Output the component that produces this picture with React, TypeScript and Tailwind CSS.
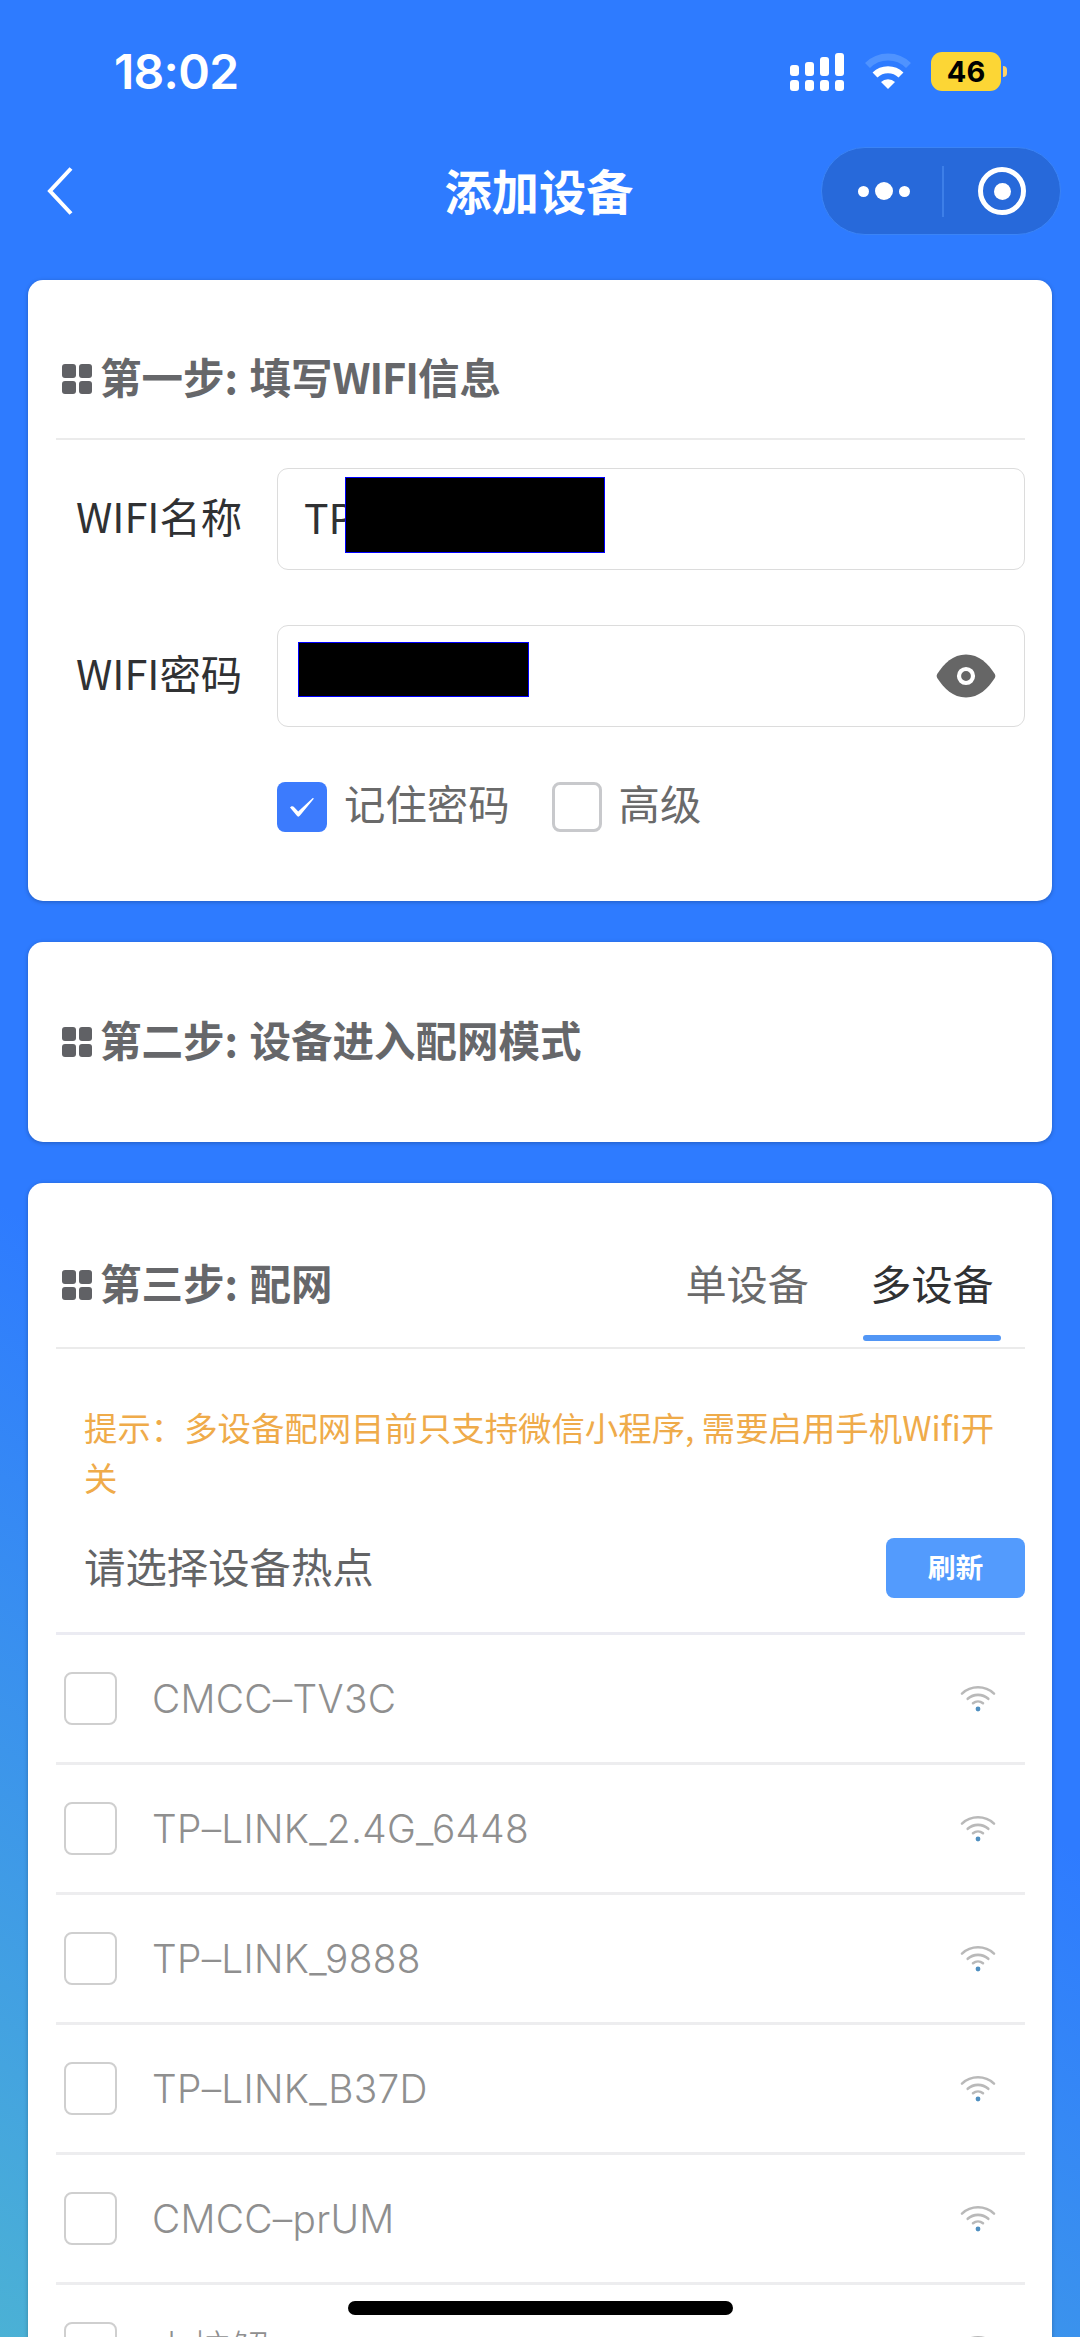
import { useState } from "react";
import type { ReactNode } from "react";

const networks = [
  "CMCC–TV3C",
  "TP–LINK_2.4G_6448",
  "TP–LINK_9888",
  "TP–LINK_B37D",
  "CMCC–prUM",
  "小核解",
];

function StatusBar() {
  return (
    <div className="flex h-[147px] items-start justify-between pr-[73px] pl-[114px]">
      <div className="mt-[43px] font-['Inter'] text-[48px] leading-[58px] font-semibold tracking-[-0.7px] text-white">
        18:02
      </div>
      <div className="mt-[52px] flex items-start">
        <svg width="54" height="39" viewBox="0 0 54 39" fill="#fff">
          <rect x="0" y="13" width="9" height="11" rx="3" />
          <rect x="15" y="10" width="9" height="14" rx="3" />
          <rect x="30" y="5" width="9" height="19" rx="3" />
          <rect x="45" y="1" width="9" height="23" rx="3" />
          <rect x="0" y="28" width="9" height="11" rx="3" />
          <rect x="15" y="28" width="9" height="11" rx="3" />
          <rect x="30" y="28" width="9" height="11" rx="3" />
          <rect x="45" y="28" width="9" height="11" rx="3" />
        </svg>
        <svg className="ml-[21px]" width="46" height="39" viewBox="0 0 46 39" fill="none">
          <path d="M2.5 13.6A29 29 0 0 1 43.5 13.6" stroke="#4f93ff" strokeWidth="7" />
          <path d="M10 23A18.5 18.5 0 0 1 36 23" stroke="#fff" strokeWidth="7" />
          <path d="M23 37L16 30A10 10 0 0 1 30 30Z" fill="#fff" />
        </svg>
        <div className="ml-5 flex items-center gap-[2px]">
          <div className="flex h-[39px] w-[70px] items-center justify-center rounded-[11px] bg-[#fcd635] font-['Inter'] text-[29px] leading-none font-bold text-black">
            46
          </div>
          <div className="h-[11px] w-1 rounded-r-full bg-[#fcd26a]" />
        </div>
      </div>
    </div>
  );
}

function NavBar() {
  return (
    <div className="grid h-[88px] grid-cols-3 items-center pr-[19px] pl-[46px]">
      <svg width="28" height="48" viewBox="0 0 28 48" fill="none" stroke="#fff" strokeWidth="4">
        <path d="M25 1.5L4 24L25 46.5" />
      </svg>
      <div className="-mt-[2px] -ml-[29px] text-center text-[47.2px] leading-[60px] font-bold whitespace-nowrap text-white">
        添加设备
      </div>
      <div className="flex h-[88px] w-[240px] items-center justify-self-end rounded-full border border-[#3b84f6] bg-[#2769da]">
        <div className="flex flex-1 items-center justify-center gap-[6px] pl-1">
          <span className="size-[11px] rounded-full bg-white" />
          <span className="size-[18px] rounded-full bg-white" />
          <span className="size-[11px] rounded-full bg-white" />
        </div>
        <div className="h-[51px] w-[2px] bg-[#3d7fe8]" />
        <div className="flex flex-1 items-center justify-center">
          <div className="flex size-12 items-center justify-center rounded-full border-[5.5px] border-white">
            <span className="size-[17px] rounded-full bg-white" />
          </div>
        </div>
      </div>
    </div>
  );
}

function Heading({ children }: { children: ReactNode }) {
  return (
    <div className="flex items-center">
      <div className="grid grid-cols-2 gap-[3px]">
        <span className="size-[13.5px] rounded-[3px] bg-[#606165]" />
        <span className="size-[13.5px] rounded-[3px] bg-[#606165]" />
        <span className="size-[13.5px] rounded-[3px] bg-[#606165]" />
        <span className="size-[13.5px] rounded-[3px] bg-[#606165]" />
      </div>
      <h2 className="-mt-[6px] ml-2 text-[41.5px] leading-[60px] font-bold [word-spacing:2px] whitespace-pre text-[#66676a]">
        {children}
      </h2>
    </div>
  );
}

function Check({ label, checked, onToggle }: { label: string; checked: boolean; onToggle: () => void }) {
  return (
    <button type="button" onClick={onToggle} className="flex items-center gap-[17px]">
      {checked ? (
        <span className="flex size-[50px] items-center justify-center rounded-[8px] bg-[#3c7bfd]">
          <svg width="26" height="22" viewBox="0 0 26 22">
            <path d="M1 11.5C2.5 9.6 4.2 10 5.2 11.2L9.2 15.4L23.5 2.2C24.3 1.6 25 2.3 24.4 3.2L11 19.6C9.9 21 8.6 21 7.700 19.6Z" fill="#fff" />
          </svg>
        </span>
      ) : (
        <span className="size-[50px] rounded-[8px] border-[3px] border-[#c8c9cc]" />
      )}
      <span className="-mt-[9px] text-[41.4px] leading-[60px] text-[#6a6a6a]">{label}</span>
    </button>
  );
}

function WifiIcon() {
  return (
    <svg className="-mt-[2px]" width="36" height="28" viewBox="0 0 36 28" fill="none" stroke="#b9b9b9" strokeWidth="2.6" strokeLinecap="round">
      <path d="M2 9.6A23.5 23.5 0 0 1 34 9.6" />
      <path d="M7.7 14.8A15.5 15.5 0 0 1 28.3 14.8" />
      <path d="M13 19.2A8 8 0 0 1 23 19.2" />
      <circle cx="18" cy="25" r="2.4" fill="#4f8fc0" stroke="none" />
    </svg>
  );
}

export default function App() {
  const [remember, setRemember] = useState(true);
  const [advanced, setAdvanced] = useState(false);

  return (
    <div className="relative h-[2337px] w-[1080px] overflow-hidden bg-[linear-gradient(211deg,#2e7bff_62%,#4bb1d5_100%)] font-['Noto_Sans_CJK_SC',sans-serif]">
      <StatusBar />
      <NavBar />

      <main className="mx-7 mt-[45px] flex flex-col gap-[41px]">
        <section className="h-[621px] rounded-[15px] bg-white pr-[27px] pl-7 shadow-[0_1px_4px_rgba(0,0,0,0.25)]">
          <div className="flex h-[160px] items-center border-b-2 border-[#ebebeb] pt-[40px] pl-[6px]">
            <Heading>
              第一步: 填写<span className="tracking-[-1px]">WIFI</span>信息
            </Heading>
          </div>
          <div className="mt-7 flex items-center">
            <label className="-mt-[9px] w-[221px] pl-5 text-[41.4px] leading-[60px] text-[#303133]">WIFI名称</label>
            <div className="flex h-[102px] flex-1 items-center rounded-[11px] border border-[#dcdcdc] pl-[26px] text-[41px] leading-[60px] text-[#303133]">
              <span className="-mt-[7px] w-[41px]">TP</span>
              <span className="relative -mt-[8px] h-[76px] w-[260px] border border-[#00f] bg-black" />
            </div>
          </div>
          <div className="mt-[55px] flex items-center">
            <label className="-mt-[9px] w-[221px] pl-5 text-[41.4px] leading-[60px] text-[#303133]">WIFI密码</label>
            <div className="flex h-[102px] flex-1 items-center justify-between rounded-[11px] border border-[#dcdcdc] pr-7 pl-5">
              <span className="-mt-[13px] h-[55px] w-[231px] border border-[#00f] bg-black" />
              <svg width="60" height="44" viewBox="0 0 60 44">
                <path d="M1.2 20C8 9.500 17 0.500 30 0.500S52 9.500 58.800 20Q60 22 58.800 24C52 34.500 43 43.500 30 43.500S8 34.500 1.200 24Q0 22 1.200 20Z" fill="#666" />
                <circle cx="30" cy="22" r="7" fill="none" stroke="#fff" strokeWidth="4.2" />
              </svg>
            </div>
          </div>
          <div className="mt-[54px] ml-[221px] flex gap-[42px]">
            <Check label="记住密码" checked={remember} onToggle={() => setRemember(!remember)} />
            <Check label="高级" checked={advanced} onToggle={() => setAdvanced(!advanced)} />
          </div>
        </section>

        <section className="flex h-[200px] items-center rounded-[15px] bg-white pl-[34px] shadow-[0_1px_4px_rgba(0,0,0,0.25)]">
          <Heading>第二步: 设备进入配网模式</Heading>
        </section>

        <section className="h-[1300px] rounded-[15px] bg-white pr-[27px] pl-7 shadow-[0_1px_4px_rgba(0,0,0,0.25)]">
          <div className="flex h-[166px] items-end justify-between border-b-2 border-[#ebebeb] pr-6 pl-[6px]">
            <div className="pb-[35px]">
              <Heading>第三步: 配网</Heading>
            </div>
            <div className="flex gap-[54px] text-[41.2px] leading-[60px]">
              <span className="text-[#6a6a6a]">单设备</span>
              <div className="flex w-[138px] flex-col items-center pb-[6px] text-[#303133]">
                <span>多设备</span>
                <span className="mt-[23px] h-[6px] w-full rounded-full bg-[#5296f5]" />
              </div>
            </div>
          </div>
          <p className="-mr-2 mt-[53px] ml-7 text-[33.4px] leading-[50px] text-[#efab4a]">
            提示：多设备配网目前只支持微信小程序, 需要启用手机Wifi开
            <br />关
          </p>
          <div className="mt-[2px] flex h-[131px] items-center justify-between border-b-[3px] border-[#ebebf2] pl-7">
            <span className="-mt-[6px] text-[41.4px] leading-[60px] text-[#636466]">请选择设备热点</span>
            <button type="button" className="h-[60px] w-[139px] rounded-[8px] bg-[#539bfd] pb-[3px] text-[27.8px] leading-[57px] font-bold text-white">
              刷新
            </button>
          </div>
          {networks.map((name) => (
            <div key={name} className="flex h-[130px] items-center border-b-[3px] border-[#ededef] pr-[29px] pl-2">
              <span className="size-[53px] rounded-[8px] border-2 border-[#cfcfcf]" />
              <span className="ml-[35px] flex-1 font-['Inter','Noto_Sans_CJK_SC',sans-serif] text-[38.8px] leading-[60px] font-light tracking-[0.3px] text-[#8f8f8f]">
                {name}
              </span>
              <WifiIcon />
            </div>
          ))}
        </section>
      </main>

      {/* Home indicator floats over the scrolling list */}
      <div className="absolute bottom-[22px] left-[348px] h-[14px] w-[385px] rounded-full bg-black" />
    </div>
  );
}
